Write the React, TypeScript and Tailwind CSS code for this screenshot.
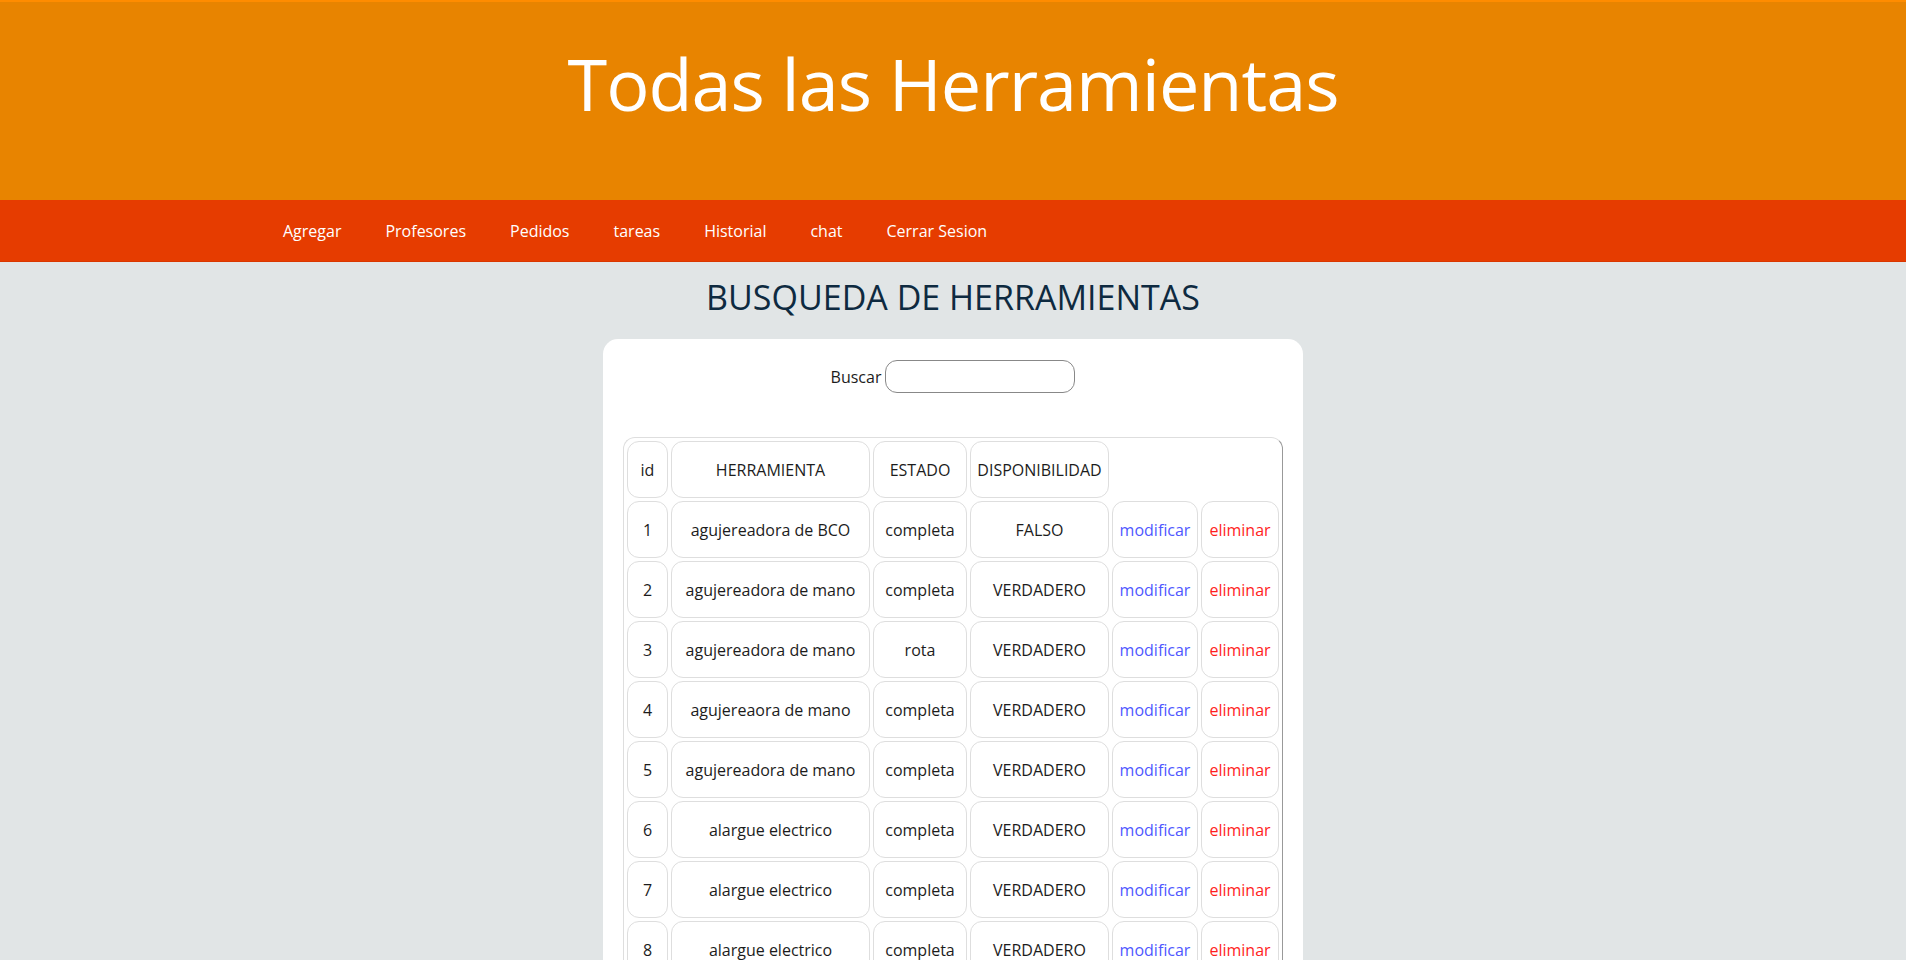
const links = ["Agregar", "Profesores", "Pedidos", "tareas", "Historial", "chat", "Cerrar Sesion"]

const herramientas = [
    { id: 1, nombre: "agujereadora de BCO", estado: "completa", disp: "FALSO" },
    { id: 2, nombre: "agujereadora de mano", estado: "completa", disp: "VERDADERO" },
    { id: 3, nombre: "agujereadora de mano", estado: "rota", disp: "VERDADERO" },
    { id: 4, nombre: "agujereaora de mano", estado: "completa", disp: "VERDADERO" },
    { id: 5, nombre: "agujereadora de mano", estado: "completa", disp: "VERDADERO" },
    { id: 6, nombre: "alargue electrico", estado: "completa", disp: "VERDADERO" },
    { id: 7, nombre: "alargue electrico", estado: "completa", disp: "VERDADERO" },
    { id: 8, nombre: "alargue electrico", estado: "completa", disp: "VERDADERO" },
]

const cell = "h-[57px] p-0 border border-[#dedede] rounded-xl text-center align-middle font-normal"

const App = () => {
    return (
        <div className="h-screen overflow-hidden bg-[#e1e5e6] font-['Open_Sans',sans-serif] text-[#1c1c1c]">

            {/* Header */}
            <header className="h-[200px] bg-[#e88400] border-t-2 border-[#ff8c00] text-center">
                <h1 className="pt-[45px] text-[72px] leading-none tracking-[-1px] text-white">Todas las Herramientas</h1>
            </header>

            {/* Nav */}
            <nav className="h-[62px] bg-[#e63c00] border-b border-[#d93600] flex items-center pl-[261px]">
                {links.map((l) => (
                    <a key={l} className="px-[22px] text-base text-white cursor-pointer">{l}</a>
                ))}
            </nav>

            <h2 className="mt-[10px] text-center text-[34px] text-[#0e2a40]">BUSQUEDA DE HERRAMIENTAS</h2>

            {/* Card */}
            <div className="mx-auto mt-[16px] w-[700px] bg-white rounded-[15px] px-5 pt-[21px] pb-6">
                <div className="flex items-center justify-center gap-1 text-base">
                    <label>Buscar</label>
                    <input className="w-[190px] h-[33px] border border-[#888] rounded-xl px-2 outline-none" />
                </div>

                <table className="mt-[44px] w-[660px] border-separate border-spacing-[3px] border border-[#dedede] border-r-[#999] rounded-xl text-base">
                    <thead>
                        <tr>
                            <th className={`${cell} w-[41px]`}>id</th>
                            <th className={`${cell} w-[199px]`}>HERRAMIENTA</th>
                            <th className={`${cell} w-[94px]`}>ESTADO</th>
                            <th className={`${cell} w-[139px]`}>DISPONIBILIDAD</th>
                        </tr>
                    </thead>
                    <tbody>
                        {herramientas.map((h) => (
                            <tr key={h.id}>
                                <td className={cell}>{h.id}</td>
                                <td className={cell}>{h.nombre}</td>
                                <td className={cell}>{h.estado}</td>
                                <td className={cell}>{h.disp}</td>
                                <td className={`${cell} w-[86px] text-[#5058ff]`}>modificar</td>
                                <td className={`${cell} w-[78px] text-[#ff1e1e]`}>eliminar</td>
                            </tr>
                        ))}
                    </tbody>
                </table>
            </div>

        </div>
    )
}

export default App;
